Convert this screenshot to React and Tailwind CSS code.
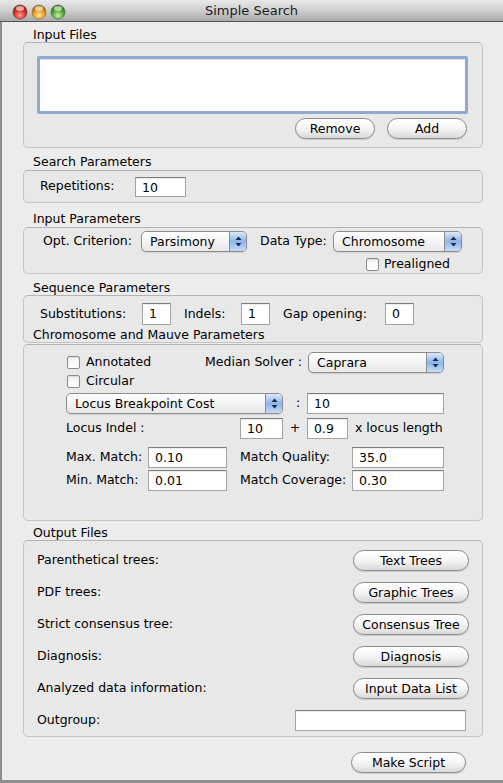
import React from 'react'

function TrafficLights() {
  const lights = [
    { id: 'r', edge: '#8e1d17', base: '#dc3a30', hi: '#ff9f94' },
    { id: 'y', edge: '#9a640f', base: '#eaa62b', hi: '#ffe39a' },
    { id: 'g', edge: '#2f6e1c', base: '#5fb03e', hi: '#c9f2a6' },
  ]
  return (
    <svg width="68" height="22" viewBox="0 0 68 22">
      <defs>
        {lights.map((l) => (
          <radialGradient key={l.id} id={`tl-${l.id}`} cx="50%" cy="75%" r="65%">
            <stop offset="0%" stopColor={l.hi} />
            <stop offset="55%" stopColor={l.base} />
            <stop offset="100%" stopColor={l.edge} />
          </radialGradient>
        ))}
      </defs>
      {lights.map((l, i) => (
        <g key={l.id}>
          <circle cx={20 + i * 19} cy={12} r={7} fill={`url(#tl-${l.id})`} stroke={l.edge} strokeWidth="0.6" />
          <ellipse cx={20 + i * 19} cy={8.4} rx={4} ry={2.3} fill="#ffffff" opacity="0.6" />
        </g>
      ))}
    </svg>
  )
}

function AquaButton({ children, className = '' }) {
  return (
    <button
      className={`h-[21px] rounded-full border border-[#8a8a8a] bg-linear-to-b from-white via-[#f5f5f5] to-[#d9d9d9] text-center text-[12.5px] leading-[19px] text-black shadow-[0_1px_1px_rgba(0,0,0,0.12)] ${className}`}
    >
      {children}
    </button>
  )
}

function Arrows() {
  return (
    <svg width="7" height="11" viewBox="0 0 7 11">
      <path d="M3.5 0.5 L6.5 4 L0.5 4 Z" fill="#1b2b48" />
      <path d="M0.5 7 L6.5 7 L3.5 10.5 Z" fill="#1b2b48" />
    </svg>
  )
}

function Popup({ value, className = '' }) {
  return (
    <div
      className={`flex h-[21px] overflow-hidden rounded-[5px] border border-[#8c8c8c] bg-linear-to-b from-white to-[#e8e8e8] shadow-[0_1px_1px_rgba(0,0,0,0.1)] ${className}`}
    >
      <span className="flex-1 pl-[8px] text-[12.5px] leading-[19px]">{value}</span>
      <span className="flex w-[17px] items-center justify-center border-l border-[#8c8c8c] bg-linear-to-b from-[#dbe9fa] via-[#8db4e8] to-[#c5dcf7]">
        <Arrows />
      </span>
    </div>
  )
}

function Field({ value = '', className = '' }) {
  return (
    <div
      className={`border border-[#a3a3a3] border-t-[#7c7c7c] bg-white pl-[6px] text-[12.5px] leading-[19px] shadow-[inset_0_1px_1px_rgba(0,0,0,0.08)] ${className}`}
    >
      {value}
    </div>
  )
}

function Checkbox() {
  return (
    <span className="inline-block h-[13px] w-[13px] rounded-[2px] border border-[#8b8b8b] bg-linear-to-b from-[#f2f2f2] to-white shadow-[inset_0_1px_1px_rgba(0,0,0,0.1)]" />
  )
}

function GroupLabel({ children, className = '' }) {
  return <div className={`h-[15px] pl-[10px] text-[12.5px] leading-[15px] ${className}`}>{children}</div>
}

function Box({ children, className = '' }) {
  return (
    <div className={`w-[460px] rounded-[5px] border border-[#c4c4c4] border-t-[#b4b4b4] bg-[#e8e8e8] ${className}`}>
      {children}
    </div>
  )
}

const OUTPUTS = [
  ['Parenthetical trees:', 'Text Trees'],
  ['PDF trees:', 'Graphic Trees'],
  ['Strict consensus tree:', 'Consensus Tree'],
  ['Diagnosis:', 'Diagnosis'],
  ['Analyzed data information:', 'Input Data List'],
]

export default function App() {
  return (
    <div className="flex h-[783px] w-[503px] flex-col overflow-hidden font-['DejaVu_Sans',sans-serif] text-[12.5px] text-black">
      {/* Title bar */}
      <div className="relative flex h-[22px] shrink-0 items-center justify-center border-b border-[#555555] bg-linear-to-b from-[#e8e8e8] via-[#cfcfcf] to-[#a9a9a9]">
        <div className="absolute left-0 top-0">
          <TrafficLights />
        </div>
        <span className="text-[13px] text-[#1c1c1c]">Simple Search</span>
      </div>

      <div className="flex flex-1 flex-col border-b-[3px] border-l-[2px] border-[#8e8e8e] bg-[#ececec] pl-[21px]">
        {/* Input Files */}
        <GroupLabel className="mt-[5px]">Input Files</GroupLabel>
        <Box className="h-[106px]">
          <div className="ml-[13px] mt-[13px] h-[58px] w-[431px] rounded-[2px] border-[3px] border-[#8eaad3] bg-white shadow-[inset_0_1px_1px_rgba(0,0,0,0.15)]" />
          <div className="mt-[4px] flex justify-end gap-[12px] pr-[15px]">
            <AquaButton className="w-[80px]">Remove</AquaButton>
            <AquaButton className="w-[80px]">Add</AquaButton>
          </div>
        </Box>

        {/* Search Parameters */}
        <GroupLabel className="mt-[6px]">Search Parameters</GroupLabel>
        <Box className="mt-[1px] flex h-[33px] items-center pl-[16px]">
          <span className="w-[95px]">Repetitions:</span>
          <Field value="10" className="h-[20px] w-[51px]" />
        </Box>

        {/* Input Parameters */}
        <GroupLabel className="mt-[8px]">Input Parameters</GroupLabel>
        <Box className="mt-[1px] h-[47px]">
          <div className="mt-[3px] flex items-center pl-[19px]">
            <span className="w-[98px]">Opt. Criterion:</span>
            <Popup value="Parsimony" className="w-[106px]" />
            <span className="w-[86px] pl-[13px]">Data Type:</span>
            <Popup value="Chromosome" className="w-[129px]" />
          </div>
          <div className="mt-[4px] flex h-[16px] items-center gap-[5px] pl-[342px]">
            <Checkbox />
            <span>Prealigned</span>
          </div>
        </Box>

        {/* Sequence Parameters */}
        <GroupLabel className="mt-[6px]">Sequence Parameters</GroupLabel>
        <Box className="h-[48px]">
          <div className="mt-[7px] flex items-center pl-[16px]">
            <span className="w-[102px]">Substitutions:</span>
            <Field value="1" className="h-[22px] w-[29px] leading-[20px]" />
            <span className="w-[70px] pl-[13px]">Indels:</span>
            <Field value="1" className="h-[22px] w-[29px] leading-[20px]" />
            <span className="w-[115px] pl-[13px]">Gap opening:</span>
            <Field value="0" className="h-[22px] w-[29px] leading-[20px]" />
          </div>
          <div className="mt-[2px] h-[15px] pl-[9px] leading-[15px]">Chromosome and Mauve Parameters</div>
        </Box>

        {/* Chromosome and Mauve Parameters */}
        <Box className="mt-[1px] h-[177px] pl-[42px]">
          <div className="mt-[7px] flex h-[20px] items-center">
            <div className="flex w-[139px] items-center gap-[6px] pl-[1px]">
              <Checkbox />
              <span>Annotated</span>
            </div>
            <span className="w-[103px]">Median Solver :</span>
            <Popup value="Caprara" className="w-[136px]" />
          </div>
          <div className="mt-[1px] flex h-[16px] items-center gap-[6px] pl-[1px]">
            <Checkbox />
            <span>Circular</span>
          </div>
          <div className="mt-[4px] flex items-center">
            <Popup value="Locus Breakpoint Cost" className="w-[217px]" />
            <span className="w-[24px] pl-[13px]">:</span>
            <Field value="10" className="h-[21px] w-[137px]" />
          </div>
          <div className="mt-[4px] flex items-center">
            <span className="w-[174px]">Locus Indel :</span>
            <Field value="10" className="h-[21px] w-[43px]" />
            <span className="w-[24px] text-center">+</span>
            <Field value="0.9" className="h-[21px] w-[41px]" />
            <span className="pl-[7px]">x locus length</span>
          </div>
          <div className="mt-[8px] flex items-center">
            <span className="w-[82px]">Max. Match:</span>
            <Field value="0.10" className="h-[21px] w-[79px]" />
            <span className="w-[125px] pl-[13px]">Match Quality:</span>
            <Field value="35.0" className="h-[21px] w-[92px]" />
          </div>
          <div className="mt-[2px] flex items-center">
            <span className="w-[82px]">Min. Match:</span>
            <Field value="0.01" className="h-[21px] w-[79px]" />
            <span className="w-[125px] pl-[13px]">Match Coverage:</span>
            <Field value="0.30" className="h-[21px] w-[92px]" />
          </div>
        </Box>

        {/* Output Files */}
        <GroupLabel className="mt-[4px]">Output Files</GroupLabel>
        <Box className="h-[197px] pt-[3px]">
          {OUTPUTS.map(([label, action]) => (
            <div key={label} className="flex h-[32px] items-center justify-between pl-[13px] pr-[13px]">
              <span>{label}</span>
              <AquaButton className="w-[116px]">{action}</AquaButton>
            </div>
          ))}
          <div className="flex h-[32px] items-center justify-between pl-[13px] pr-[16px]">
            <span>Outgroup:</span>
            <Field className="h-[21px] w-[171px]" />
          </div>
        </Box>

        <div className="mt-[15px] flex justify-end pr-[37px]">
          <AquaButton className="w-[115px]">Make Script</AquaButton>
        </div>
      </div>
    </div>
  )
}
